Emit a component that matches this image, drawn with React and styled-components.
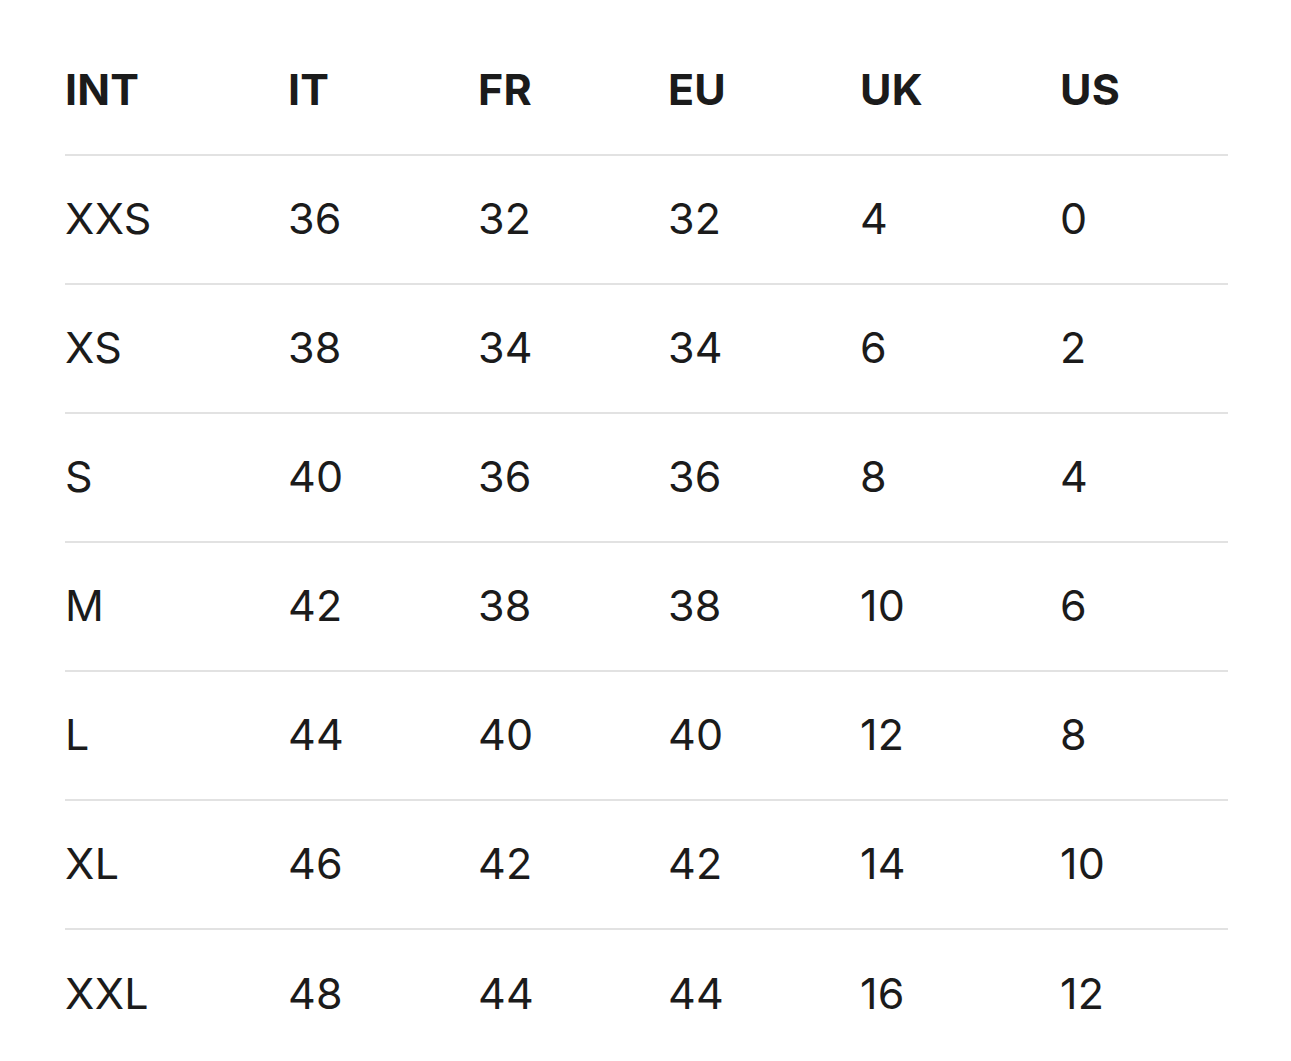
import React from "react";
import styled, { createGlobalStyle } from "styled-components";

const GlobalStyle = createGlobalStyle`
  body {
    margin: 0;
    background: #ffffff;
    font-family: Inter, "Noto Sans", Arial, sans-serif;
    color: #1b1b1b;
  }
`;

const Wrapper = styled.div`
  padding: 27px 63px 0 65px;
`;

const Table = styled.div`
  display: flex;
  flex-direction: column;
`;

const Row = styled.div`
  display: grid;
  grid-template-columns: 223px 190px 190px 192px 200px 1fr;
  height: 129px;
  padding-bottom: 3px;
  align-items: center;
  border-bottom: ${(p) => (p.last ? "none" : "2px solid #e2e2e2")};
  box-sizing: border-box;
`;

const Cell = styled.div`
  font-size: 43px;
  font-weight: ${(p) => (p.head ? 700 : 400)};
  letter-spacing: ${(p) => (p.head ? "0.2px" : "0.3px")};
  line-height: 1;
`;

const headers = ["INT", "IT", "FR", "EU", "UK", "US"];

const sizes = [
  ["XXS", "36", "32", "32", "4", "0"],
  ["XS", "38", "34", "34", "6", "2"],
  ["S", "40", "36", "36", "8", "4"],
  ["M", "42", "38", "38", "10", "6"],
  ["L", "44", "40", "40", "12", "8"],
  ["XL", "46", "42", "42", "14", "10"],
  ["XXL", "48", "44", "44", "16", "12"],
];

const App = () => {
  return (
    <Wrapper>
      <GlobalStyle />
      <Table>
        <Row>
          {headers.map((h) => (
            <Cell head key={h}>
              {h}
            </Cell>
          ))}
        </Row>
        {sizes.map((row, idx) => (
          <Row key={row[0]} last={idx === sizes.length - 1}>
            {row.map((v, i) => (
              <Cell key={i}>{v}</Cell>
            ))}
          </Row>
        ))}
      </Table>
    </Wrapper>
  );
};

export default App;
